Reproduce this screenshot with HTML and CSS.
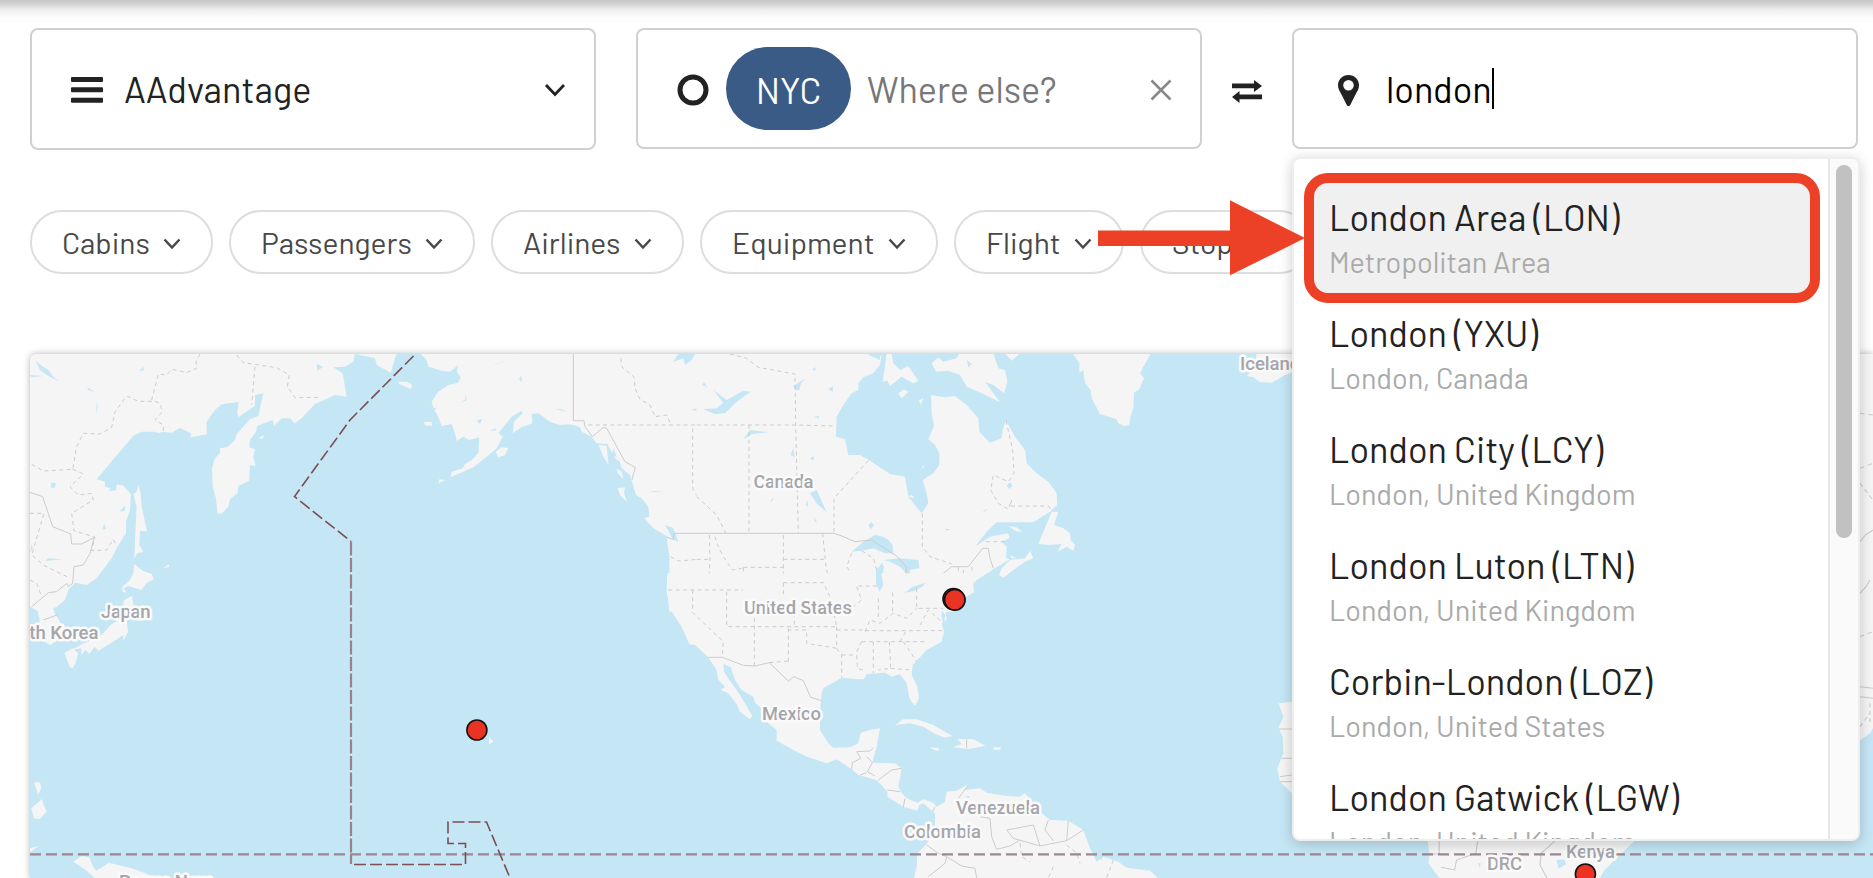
FILE: index.html
```html
<!DOCTYPE html>
<html lang="en">
<head>
<meta charset="utf-8">
<title>Route map search</title>
<link rel="stylesheet" href="styles.css">
</head>
<body>
<main class="page">
  <section class="search">
    <div class="field program">
      <svg class="icon-bars" viewBox="0 0 32 26"><rect width="32" height="5" rx="1"/><rect y="10.3" width="32" height="5" rx="1"/><rect y="20.8" width="32" height="5" rx="1"/></svg>
      <span class="program-name">AAdvantage</span>
      <svg class="chevron" viewBox="0 0 22 14"><path d="M2 2l9 9.500L20 2"/></svg>
    </div>
    <div class="field origin">
      <svg class="icon-ring" viewBox="0 0 32 32"><circle cx="16" cy="16" r="13"/></svg>
      <span class="tag">NYC</span>
      <span class="placeholder">Where else?</span>
      <svg class="icon-clear" viewBox="0 0 22 22"><path d="M1.500 1.500l19 19M20.500 1.500l-19 19"/></svg>
    </div>
    <svg class="icon-swap" viewBox="0 0 30 23"><path d="M0 3.500h22V0l8 6-8 6V8.300H0zM30 14.500H7.500V11L0 17l7.500 6v-3.700H30z"/></svg>
    <div class="field destination">
      <svg class="icon-pin" viewBox="0 0 21 31"><path fill-rule="evenodd" d="M10.500 0C4.500 0 0 4.500 0 10.300c0 4 2 6.500 4 10.200l4.500 9c.8 2 3.200 2 4 0l4.500-9c2-3.700 4-6.200 4-10.200C21 4.500 16.500 0 10.500 0zm0 5a5.300 5.300 0 1 1 0 10.600 5.300 5.300 0 0 1 0-10.600z"/></svg>
      <span class="query">london</span><i class="caret"></i>
      <div class="dropdown">
        <ul class="results">
          <li class="result active"><b>London Area (LON)</b><small>Metropolitan Area</small></li>
          <li class="result"><b>London (YXU)</b><small>London, Canada</small></li>
          <li class="result"><b>London City (LCY)</b><small>London, United Kingdom</small></li>
          <li class="result"><b>London Luton (LTN)</b><small>London, United Kingdom</small></li>
          <li class="result"><b>Corbin-London (LOZ)</b><small>London, United States</small></li>
          <li class="result"><b>London Gatwick (LGW)</b><small>London, United Kingdom</small></li>
        </ul>
        <div class="track"><div class="thumb"></div></div>
      </div>
    </div>
  </section>

  <nav class="filters">
    <span class="chip cabins">Cabins<svg viewBox="0 0 18 12"><path d="M1.500 1.500L9 9.500l7.500-8"/></svg></span>
    <span class="chip passengers">Passengers<svg viewBox="0 0 18 12"><path d="M1.500 1.500L9 9.500l7.500-8"/></svg></span>
    <span class="chip airlines">Airlines<svg viewBox="0 0 18 12"><path d="M1.500 1.500L9 9.500l7.500-8"/></svg></span>
    <span class="chip equipment">Equipment<svg viewBox="0 0 18 12"><path d="M1.500 1.500L9 9.500l7.500-8"/></svg></span>
    <span class="chip flight">Flight<svg viewBox="0 0 18 12"><path d="M1.500 1.500L9 9.500l7.500-8"/></svg></span>
    <span class="chip stops">Stops<svg viewBox="0 0 18 12"><path d="M1.500 1.500L9 9.500l7.500-8"/></svg></span>
  </nav>

  <section class="map">
    <svg viewBox="30 354 1843 524">
      <!-- East Asia -->
      <g transform="translate(0 340) scale(.33333)">
        <path class="land" d="M90 40H1065L1060 65 1035 80 1000 82 1028 100 1040 170 1005 165 960 185 945 192 905 235 883 250 870 235 845 235 822 258 818 240 772 258 768 275 750 300 748 322 765 328 760 350 767 378 750 375 748 422 715 438 712 460 690 478 685 500 665 521 652 520 648 475 638 440 636 385 645 355 660 340 660 325 680 322 703 303 710 283 750 237 775 228 790 160 765 165 765 198 715 232 712 215 716 186 665 193 645 210 620 245 620 283 572 292 573 280 540 264 515 278 490 275 475 280 465 275 425 275 400 287 290 418 315 425 315 440 330 443 328 454 348 450 350 433 370 437 393 463 390 510 378 545 378 580 365 600 350 625 335 655 290 715 260 735 225 728 205 750 195 780 171 800 160 805 165 822 177 840 188 870 180 898 150 915 134 905 100 900 110 880 120 845 112 812 96 803 90 800z"/>
        <path class="land" d="M402 672L428 692 455 702 462 718 440 728 425 750 385 738 372 745 378 758 368 755 367 740 390 720 400 700zM415 435L422 460 425 500 441 574 420 572 418 615 430 635 412 640 403 655 406 580 410 500 400 462 410 455zM372 780L395 768 402 800 398 820 380 840 384 875 370 902 370 885 332 910 295 932 284 920 268 942 257 930 244 945 244 925 214 930 252 910 305 885 332 855 364 835zM193 938L220 925 234 940 227 970 217 985 209 980zM775 297L790 284 790 295zM490 685L507 673 507 681zM102 1327H120L124 1345 114 1365 110 1350zM94 1405L126 1377 131 1395 140 1415 118 1438 102 1435zM90 1525L116 1518 91 1537zM220 1565L246 1548 268 1552 279 1580 289 1592 327 1568 396 1585 450 1605 471 1614H284L257 1590zM1467 1190L1480 1205 1467 1213z"/>
        <path class="water" d="M107 62L122 75 145 90 160 110 180 126 145 108 120 90zM417 94L430 80 432 90zM262 142L285 156 265 150zM291 183L293 200 288 224zM950 72L970 80 952 92zM155 427L168 430 164 444 152 442zM358 514L376 496 374 514zM313 550L318 568 308 568zM135 663L145 655 185 658zM90 105L130 108 95 112zM95 610L98 625 90 640z"/>
        <path class="admin" d="M600 42L588 65 590 85 560 98 515 88 500 105 475 102 455 180 480 190 487 215 465 240 490 255 490 278M455 184L415 184 380 168 345 215 335 262 300 282 250 280 230 320 218 388 130 393 90 370M218 388L250 402 210 440 235 465 275 460 280 480 215 520 222 572 285 592 275 632 320 630 340 598 350 620M710 45L730 68 830 83 868 105 862 140 885 173 955 172M765 80L755 195M90 520L132 520 95 645 130 675 170 695 205 712M90 720L110 730 125 770"/>
        <path class="border" d="M90 457L128 470 158 560 212 582 215 612 245 612 283 592 270 640 250 675 222 680 218 730 205 740 200 730 170 755 145 758 95 800M130 840L171 825"/>
      </g>
      <!-- Alaska and the north-west coast -->
      <g transform="translate(320 340) scale(.33333)">
        <path class="land" d="M300 40L320 60 325 80 365 92 390 95 415 75 410 95 422 112 415 128 385 135 355 155 335 185 340 205 352 225 365 258 395 252 405 280 410 303 430 290 448 300 478 292 475 340 455 360 435 372 428 385 395 395 392 412 460 382 500 350 530 325 548 290 535 280 575 230 605 212 608 220 582 245 578 280 605 262 637 250 635 222 655 220 690 245 720 255 750 253 780 262 785 275 815 290 830 310 862 312 885 355 900 365 905 385 930 405 948 465 965 475 985 500 988 530 972 535 1000 565 1060 600 1035 555 1060 565 1075 605 1040 592 1048 650 1048 700 1040 740 1048 815H1210V40z"/>
        <path class="land" d="M118 45L165 55 170 75 212 98 228 45 235 40H105zM235 125L260 125 277 135 272 147 238 132zM312 246L335 245 336 258 315 256zM527 335L545 322 565 324 555 345 535 352zM358 418L375 420 355 431zM836 315L860 318 866 375 850 350zM890 385L905 395 910 418 893 400zM893 445L915 442 912 460 921 486 900 465z"/>
        <path class="water" d="M1060 65L1075 42 1125 42 1115 60 1095 75 1090 55zM1145 140L1150 125 1162 138zM1115 207L1150 205 1125 212zM1165 212L1200 195V225L1180 222zM1132 375L1152 382 1140 386zM988 452L1030 455 1005 457zM505 80L580 55 540 70zM597 118L604 105 606 127zM418 190L437 178 436 155 440 180zM470 242L487 236 480 252zM510 272L530 264 525 272zM705 206L740 216 725 208zM875 348L880 325 890 350zM340 205L350 203 342 212z"/>
        <path class="border" d="M760 40V242H792L795 260 817 290 850 262 860 265 915 365 946 382 936 420M1065 580H1210M1040 592L1060 598 1062 580"/>
        <path class="admin" d="M805 255H1210M903 55L905 80 943 112 945 145 960 178 990 195 1005 230 1040 225 1052 253M1118 265V445L1125 460 1200 540M1052 650L1075 663 1170 655 1168 580M1170 655L1165 750M1060 750H1210M1118 755V815M1185 590L1192 620"/>
      </g>
      <!-- Canada and the north-east -->
      <g transform="translate(700 340) scale(.33333)">
        <path class="land" d="M-10 40H500L530 55 545 45 540 75 520 100 490 112 475 130 475 150 455 160 430 195 410 230 408 290 435 298 445 345 480 345 510 362 570 402 615 410 625 470 665 520 685 490 680 460 668 420 700 400 718 375 718 340 705 315 685 297 702 258 695 220 693 165 735 172 765 168 800 195 835 235 838 275 870 308 905 295 908 270 918 242 945 290 975 330 980 370 1010 400 1045 425 1070 460 1072 495 1050 515 1000 547H890L860 575 825 620 870 590 925 580 928 595 905 605 920 620 918 655 930 658 885 685 830 720 818 735 822 755 800 770 780 780 760 815H-10z"/>
        <path class="land" d="M930 660L975 655 990 632 1000 655 975 665 940 690 910 713 897 705 905 685zM1055 515H1075L1062 555 1090 565 1110 580 1112 600 1125 615 1120 632 1100 620 1072 635 1085 612 1050 615 1015 612zM925 558L950 562 968 577 945 572zM548 125L555 80 560 40 575 42 580 70 600 90 625 78 655 122 640 130 605 110 570 138 562 122zM595 160L612 148 625 155 605 175zM657 180L670 175 662 195zM695 70L715 52 730 65 770 55 778 40H880L895 85 915 90 922 125 912 160 880 135 855 125 900 187 845 160 800 140 780 105 745 92 708 95zM915 40H960L935 62zM625 470L645 475 635 465zM665 385L672 375V382zM930 645L950 655 935 655z"/>
        <path class="water" d="M455 635L490 605 525 585 550 590 565 600 578 615 580 640 555 640 520 625 485 632zM530 690L545 668 552 680 545 720 552 752 535 758 525 730zM550 660L600 655 655 660 658 685 630 690 628 725 615 735 618 700 600 680 570 665zM610 750L640 742 680 728 672 742 635 758zM675 715L700 705 725 705 715 715 690 720zM330 460L350 450 380 517 350 490zM40 150L80 180 130 152 152 155 110 185 75 220 45 222 10 208 50 205 70 188zM130 298L150 270 205 277 155 283zM280 138L295 128 318 115 303 130 298 150 285 150zM385 148L400 138 398 155zM272 345L280 325 284 352zM330 355L342 348 340 362zM500 42L530 50 540 40V60zM505 555L515 546 522 556 512 568zM920 436L932 427 937 438 928 447zM848 515L862 505 858 514zM735 566L752 568 740 572zM340 530L352 547 345 545zM210 485L222 470 218 482zM317 495L322 480 324 500zM6 135L12 127 22 140zM335 88L348 82 345 92zM342 230L358 228 355 236zM800 60L815 72 805 82z"/>
        <path class="border" d="M-10 580H402L425 588 465 605 515 600 590 648 618 680 620 735 610 748 670 725 715 712 755 680H805L848 625 865 625 870 655 880 685"/>
        <path class="admin" d="M90 42L140 55 175 82 285 102 287 255 295 580M-10 255H287L408 258M147 255V580M505 362L402 475V575M-10 470L50 525 78 580M667 520V620L690 650 755 672M918 242L938 330 942 400 925 425 880 405 872 450 895 490 925 508 935 480 930 498 1045 498 1055 512M28 585L30 660 25 750M45 590L55 620 70 650 98 690 125 685M-10 658H30M130 682V750M-10 750H130M130 682H250M250 585V730M250 658H375M368 580L378 680 385 715 470 712M250 730L370 728 390 780M80 755V815M480 735L545 740 545 757 610 755M455 640L440 680 480 735M485 632L520 655 530 690M775 680V750L650 750V800L720 800M790 690L792 735 815 740M815 680L820 730M858 605L925 605M578 757V815"/>
      </g>
      <!-- Greenland and Iceland -->
      <g transform="translate(1050 340) scale(.33333)">
        <path class="land" d="M68 40L88 70V98L100 90 105 130 122 150 125 175 150 222 200 238 205 250 222 258 238 256 240 235 250 205 252 158 268 148 282 115 270 100 280 80 300 45V40zM620 40L610 90 590 108 610 112 630 126 665 128 705 105 740 92V40z"/>
      </g>
      <!-- United States to South America -->
      <g transform="translate(640 580) scale(.33333)">
        <path class="land" d="M82 -20L80 35 92 90 125 140 148 193 165 195 205 232 230 270 235 300 255 320 242 330 265 340 290 372 300 395 330 418 337 408 312 365 290 330 268 300 252 275 250 252 272 262 285 300 305 330 340 350 345 368 370 390 385 430 410 450V482L470 515 500 530 560 550 590 538 635 568 655 585 710 600 742 635V650L790 680 832 692 838 675 850 670 875 692 885 700 885 740 862 790 832 820 830 860 820 900H1560L1530 872 1460 863 1435 845 1390 830 1370 845 1350 805 1330 750 1285 722 1230 720 1205 700 1155 640 1140 650 1100 648 1040 638 1020 625 975 630 985 613 950 632 920 635 915 665 890 680 880 668 850 658 832 668 800 655 785 640 775 620 785 565 765 550 697 548 710 500 720 445 690 450 662 458 655 490 630 502 580 503 565 490 540 450V400L545 340 550 325 605 293 655 298 672 297 680 283 712 280 735 278 755 290 780 283 800 310 808 355 825 378 837 355 832 320 815 285 818 255 860 210 905 185 912 155 905 130 920 120 915 80 922 55 940 40H1000V-20z"/>
        <path class="land" d="M765 435L790 418 830 418 880 435 937 468 915 473 885 462 850 440 810 430zM938 502L965 492 952 477 1000 478 1037 497 985 507zM870 502L895 503 898 512 882 510zM1060 502H1082V509H1060zM1916 370L1956 365V640L1920 605 1912 565 1930 520 1928 470 1915 445 1930 410z"/>
        <path class="water" d="M708 -30H722L730 15 718 35 708 10zM795 38L815 22 855 8 850 18 820 34zM905 90L915 105 912 140 905 110zM1370 832L1390 826 1385 840zM975 648L990 648 985 655z"/>
        <path class="border" d="M205 232H247L310 256 345 258 388 248 445 303 462 290 490 302 512 352 545 362M700 503L690 513 650 515 662 535 637 548 635 568M680 530L697 548 682 575 705 588M660 585L680 578M785 565L755 570 715 600M742 630L780 635M795 655L790 682M885 680L878 695M985 615L955 655M980 478V505M860 795L895 820 920 830 965 858 1005 865 1010 894M865 890L915 850 920 830M1020 710L1050 715 1055 770 1070 808 1110 798 1140 780M1100 750L1120 775 1200 798 1280 782 1330 750M1100 750L1180 735 1200 798M1225 720L1215 750 1240 782M1285 722L1280 782M1915 447H1956M1925 535H1956M1920 590L1956 585M1920 605H1956"/>
        <path class="admin" d="M85 30H310M158 30V98L250 185 247 232M260 35V140H590M343 70V258M445 245V140M388 248L445 243M430 8V50M430 8H550L570 50 590 140M590 150H675M590 140V205L500 190V150L445 150M590 205L605 225 605 293M605 225H640M665 185L650 215 652 265 670 270M665 185H855M700 185V280M748 185L752 265 715 270M752 265L812 270M790 185L830 245M675 152H910M675 155L690 120 720 130 760 100 800 115 830 85M758 38V100M715 55V120M830 25V85L910 85M840 135L865 90 905 125M780 185L800 150M650 20L665 60 640 80M655 18H715M463 100V140M1140 790L1145 830 1170 845M1280 795L1310 820 1320 850M1420 840L1400 894M1240 860L1225 894"/>
      </g>
      <!-- Africa and the eastern edge -->
      <g transform="translate(1270 580) scale(.38457 .33333)">
        <path class="land" d="M410 784L415 820 412 850 440 894H858L870 870 905 830 955 775H410zM1520 -680H1570V440L1560 460 1532 483z"/>
        <path class="water" d="M745 840L765 838 770 852 750 866zM541 850L548 850 545 864z"/>
        <path class="border" d="M415 822H440V784M540 784L535 820 485 840 480 870 445 862M740 784L705 820 702 855 720 894M1534 320L1568 325M1534 350L1568 355M1534 40L1550 20 1560 0M1534 -115L1548 -135 1568 -150"/>
        <path class="admin" d="M1534 -335L1568 -350M1534 -500L1568 -495M1534 -290L1568 -240M1534 170L1568 155M1534 440L1560 400M1560 370V430"/>
      </g>
      <path class="equator" d="M30 854.300H1873"/>
      <path class="dateline" d="M413.500 356L350 420 294.500 496.500 351 541.500"/>
      <path class="dateline soft" d="M351 541.500V864"/>
      <path class="dateline" d="M354 864.500H465.500V843.500H448V822H486.500L510 878"/>
      <g class="labels">
        <text x="753.500" y="487.500" textLength="60">Canada</text>
        <text x="744" y="613.500" textLength="108">United States</text>
        <text x="762" y="720" textLength="59">Mexico</text>
        <text x="956" y="813.500" textLength="84">Venezuela</text>
        <text x="904" y="838" textLength="77">Colombia</text>
        <text x="101" y="617.500" textLength="49.500">Japan</text>
        <text x="98.500" y="638.500" text-anchor="end">South Korea</text>
        <text x="119" y="888" textLength="92">Papua New</text>
        <text x="1240" y="369.500">Iceland</text>
        <text x="1566" y="857.500" textLength="49">Kenya</text>
        <text x="1487" y="869.500" textLength="35">DRC</text>
      </g>
      <g class="pins">
        <circle cx="953.500" cy="599" r="10.500"/><circle cx="954.800" cy="599.800" r="10.300"/>
        <circle cx="476.900" cy="730" r="10"/><circle cx="1585.400" cy="874" r="10"/>
      </g>
    </svg>
  </section>
</main>
<div class="callout-ring"></div>
<svg class="callout-arrow" viewBox="0 0 208 76"><path d="M0 30.500H132V0.300L207 38 132 75.300V46H0z"/></svg>
</body>
</html>
```
FILE: styles.css
```css
* { box-sizing: border-box; }
body {
  margin: 0;
  width: 1873px;
  height: 878px;
  overflow: hidden;
  position: relative;
  background: #fff;
  color: #222;
  font-family: Barlow, Roboto, sans-serif;
}
svg { display: block; flex: none; }

.page {
  height: 878px;
  display: flex;
  flex-direction: column;
  padding: 28px 0 0 30px;
  background: linear-gradient(#c6c6c6 0, #d2d2d2 4px, #efefef 10px, #fdfdfd 18px, #fff 24px) no-repeat 0 0 / 100% 24px;
}

.search { display: flex; align-items: flex-start; height: 182px; }
.field {
  position: relative;
  width: 566px;
  height: 121px;
  display: flex;
  align-items: center;
  border: 2px solid #d0d0d0;
  border-radius: 8px;
  background: #fff;
  font-size: 36px;
  line-height: 44px;
  white-space: nowrap;
}
.program { height: 122px; margin-right: 40px; padding: 0 28px 0 39px; }
.icon-bars { width: 32px; height: 26px; margin: 2px 21px 0 0; fill: #222; }
.chevron { width: 22px; height: 14px; margin: 2px 0 0 auto; fill: none; stroke: #222; stroke-width: 2.8; }

.origin { padding: 0 28px 0 39px; }
.icon-ring { width: 32px; height: 32px; margin-top: 3px; fill: none; stroke: #222; stroke-width: 5; }
.tag {
  width: 125px;
  height: 83px;
  margin: 0 16px 0 17px;
  border-radius: 42px;
  background: #3a5b86;
  color: #fff;
  line-height: 85px;
  text-align: center;
}
.placeholder { color: #777; }
.icon-clear { width: 22px; height: 22px; margin: 2px 0 0 auto; fill: none; stroke: #888; stroke-width: 2.5; }

.icon-swap { width: 30px; height: 23px; margin: 52px 30px 0; fill: #222; }

.destination { padding-left: 44px; color: #000; }
.icon-pin { width: 21px; height: 31px; margin: 3px 27px 0 0; fill: #222; }
.caret { width: 2px; height: 41px; background: #000; }

.dropdown {
  position: absolute;
  z-index: 2;
  left: -2px;
  top: 127px;
  width: 568px;
  height: 684px;
  display: flex;
  overflow: hidden;
  border: 2px solid #eee;
  border-radius: 8px;
  background: #fff;
  box-shadow: 0 3px 14px rgba(0, 0, 0, .2);
}
.results { flex: 1; margin: 0; padding: 19px 18px 0 20px; list-style: none; }
.result { height: 116px; padding: 17px 0 0 15px; color: #222; }
.result.active { background: #f0f0f0; }
.result b, .result small { display: block; font-weight: 400; }
.result b { font-size: 36px; line-height: 44px; }
.result small { margin-top: 2px; font-size: 28.8px; line-height: 42px; color: #aaa; }
.track { width: 30px; padding: 6px 6px 0 6px; border-left: 2px solid #e8e8e8; background: #fafafa; }
.thumb { width: 16px; height: 373px; border-radius: 8px; background: #c1c1c1; }

.filters { display: flex; gap: 16px; height: 144px; }
.chip {
  height: 64px;
  display: flex;
  flex: none;
  align-items: center;
  justify-content: space-between;
  padding: 0 30px;
  border: 2px solid #dcdde1;
  border-radius: 32px;
  color: #484848;
  font-size: 30px;
  white-space: nowrap;
}
.chip svg { width: 18px; height: 12px; margin-top: 4px; fill: none; stroke: #484848; stroke-width: 2.5; }
.cabins { width: 183px; }
.passengers { width: 246px; }
.airlines { width: 193px; }
.equipment { width: 238px; }
.flight { width: 170px; }
.stops { width: 171px; }

.map {
  flex: none;
  width: 1843px;
  height: 524px;
  overflow: hidden;
  border-radius: 6px 0 0 0;
  background: #c5e6f5;
  box-shadow: 0 0 7px rgba(0, 0, 0, .3);
}
.map svg { width: 1843px; height: 524px; }
.land { fill: #f5f5f5; }
.water { fill: #c5e6f5; }
.border, .admin { fill: none; stroke: #ccc; stroke-width: 3; }
.admin { stroke-dasharray: 12 10; }
.equator { fill: none; stroke: #9b8890; stroke-width: 2.3; stroke-dasharray: 11 5; }
.dateline { fill: none; stroke: #7c4d54; stroke-width: 1.6; stroke-dasharray: 12 4; }
.dateline.soft { stroke: #98828b; stroke-width: 2.2; stroke-dasharray: 14 2.5; }
.labels {
  font: 500 18.5px Roboto, sans-serif;
  fill: #a5a5aa;
  stroke: #fafafa;
  stroke-width: 5px;
  stroke-linejoin: round;
  paint-order: stroke;
}
.pins { fill: #eb3323; stroke: #111; stroke-width: 1.6; }

.callout-ring {
  position: absolute;
  z-index: 3;
  left: 1304px;
  top: 173px;
  width: 516px;
  height: 130px;
  border: 10px solid #ec4027;
  border-radius: 24px;
}
.callout-arrow { position: absolute; z-index: 3; left: 1098px; top: 200px; width: 208px; height: 76px; fill: #ec4027; }
```
